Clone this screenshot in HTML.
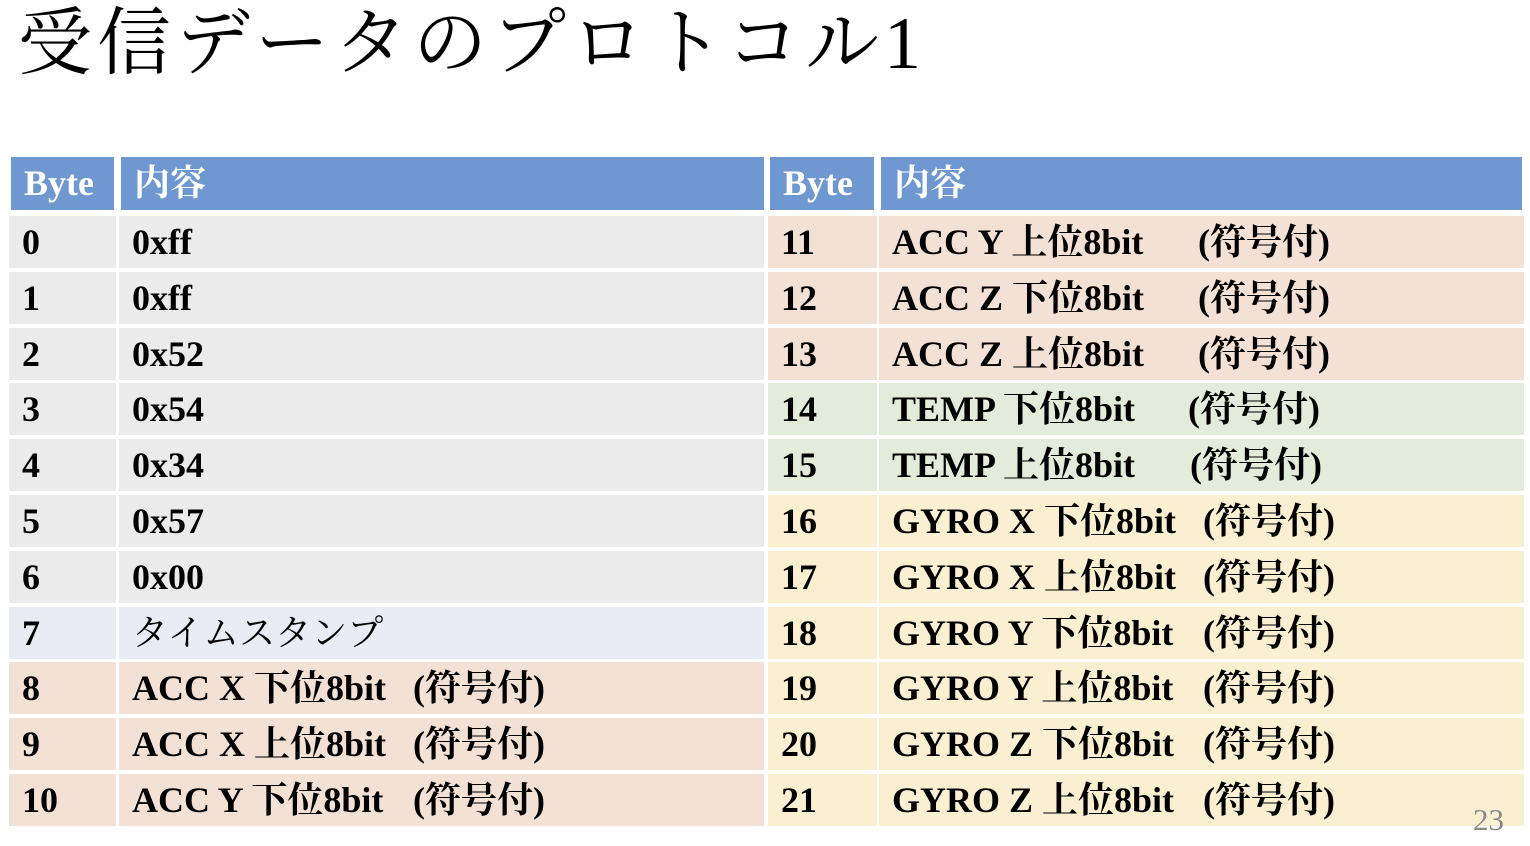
<!DOCTYPE html>
<html><head><meta charset="utf-8"><style>
body{margin:0;width:1530px;height:846px;background:#fff;position:relative;overflow:hidden;font-family:"Liberation Serif","Noto Serif CJK JP",serif;}
.t{position:absolute;left:18px;top:-16px;font-size:74px;letter-spacing:5px;white-space:nowrap;font-family:"Liberation Serif","Noto Serif CJK JP",serif;}
.c{position:absolute;font-weight:bold;font-size:36px;line-height:52px;white-space:nowrap;padding-left:13px;box-sizing:border-box;}
.h{background:#6f98d0;color:#fff;line-height:53px;}
.p{position:absolute;}
.n{position:absolute;left:1473px;top:802px;font-size:31px;color:#888;}
</style></head><body>
<div class="t">受信データのプロトコル1</div>
<div class="c h" style="left:11px;top:157px;width:103px;height:53px">Byte</div>
<div class="c h" style="left:121px;top:157px;width:643px;height:53px">内容</div>
<div class="c h" style="left:770px;top:157px;width:104px;height:53px">Byte</div>
<div class="c h" style="left:881px;top:157px;width:641px;height:53px">内容</div>
<div id="rows"></div>
<div class="n">23</div>
<script>
var L=[["0","0xff","#ebebeb"],["1","0xff","#ebebeb"],["2","0x52","#ebebeb"],["3","0x54","#ebebeb"],["4","0x34","#ebebeb"],["5","0x57","#ebebeb"],["6","0x00","#ebebeb"],["7","タイムスタンプ","#e9ecf5",1],["8","ACC X 下位8bit","#f4e1d6",0,413],["9","ACC X 上位8bit","#f4e1d6",0,413],["10","ACC Y 下位8bit","#f4e1d6",0,413]];
var R=[["11","ACC Y 上位8bit","#f4e1d6",1198],["12","ACC Z 下位8bit","#f4e1d6",1198],["13","ACC Z 上位8bit","#f4e1d6",1198],["14","TEMP 下位8bit","#e3ecdb",1188],["15","TEMP 上位8bit","#e3ecdb",1190],["16","GYRO X 下位8bit","#faf0d1",1203],["17","GYRO X 上位8bit","#faf0d1",1203],["18","GYRO Y 下位8bit","#faf0d1",1203],["19","GYRO Y 上位8bit","#faf0d1",1203],["20","GYRO Z 下位8bit","#faf0d1",1203],["21","GYRO Z 上位8bit","#faf0d1",1203]];
var h="";
for(var i=0;i<11;i++){var y=Math.round(216+i*55.8);var a=L[i];
h+='<div class="c" style="left:9px;top:'+y+'px;width:107px;height:52px;background:'+a[2]+'">'+a[0]+'</div>';
h+='<div class="c" style="left:119px;top:'+y+'px;width:645px;height:52px;background:'+a[2]+(a[3]?';font-weight:normal':'')+'">'+a[1]+'</div>';
if(a[4])h+='<div class="c p" style="left:'+a[4]+'px;top:'+y+'px;padding:0">(符号付)</div>';
var b=R[i];
h+='<div class="c" style="left:768px;top:'+y+'px;width:109px;height:52px;background:'+b[2]+'">'+b[0]+'</div>';
h+='<div class="c" style="left:879px;top:'+y+'px;width:645px;height:52px;background:'+b[2]+'">'+b[1]+'</div>';
h+='<div class="c p" style="left:'+b[3]+'px;top:'+y+'px;padding:0">(符号付)</div>';}
document.getElementById("rows").innerHTML=h;
</script>
</body></html>
